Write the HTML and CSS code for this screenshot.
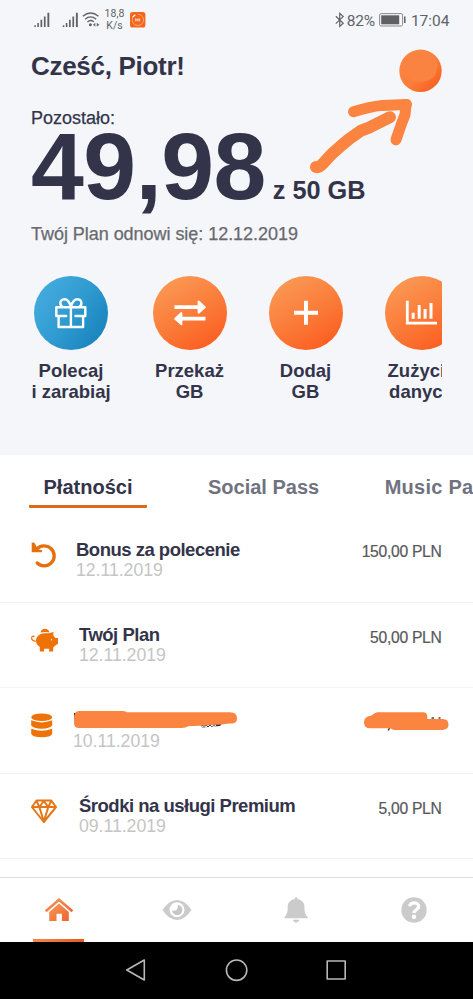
FILE: index.html
```html
<!DOCTYPE html>
<html lang="pl">
<head>
<meta charset="utf-8">
<meta name="viewport" content="width=device-width, initial-scale=1">
<title>Mój plan</title>
<link rel="stylesheet" href="styles.css">
</head>
<body>
<div class="screen">
  <header class="summary">
    <div class="status">
      <svg class="status-left" width="66" height="20" viewBox="34 10 66 20">
        <g fill="#626266">
          <path d="M34.3 25.2h1.5V27h-1.5zM37.3 23h1.6v4h-1.6zM40.5 19.8h1.7V27h-1.7zM43.9 16.6h1.7V27h-1.7zM47.4 12.8h1.9V27h-1.9z"/>
          <path d="M62.8 25.2h1.5V27h-1.5zM65.8 23h1.6v4h-1.6zM69 19.8h1.7V27H69zM72.4 16.6h1.7V27h-1.7zM75.9 12.8h1.9V27h-1.9z"/>
          <circle cx="90.4" cy="24.8" r="1.5"/>
          <path d="M93 24.7l2.3-2v4zM99.3 24.7l-2.5-2v4z"/>
        </g>
        <path d="M82.8 16.2q7.8-6.4 15.6 0M85.1 19.2q5.5-4.6 11 0M87.4 22q3.2-2.8 6.4-.2" fill="none" stroke="#626266" stroke-width="1.4"/>
      </svg>
      <div class="speed"><span>18,8</span><span>K/s</span></div>
      <svg class="status-app" width="16" height="16" viewBox="0 0 16 16">
        <rect width="15.4" height="15.6" rx="2.6" fill="#f4661c"/>
        <path d="M4 3.7a5.7 5.7 0 1 0 3.7-1.5" fill="none" stroke="#ffb58c" stroke-width=".8"/>
        <path d="M2.6 5.1l2.7-2.4" stroke="#fff" stroke-width="1.2"/>
        <path d="M5.8 6.4v3M8 6.4v3M9.6 6.5v2.8M5.8 7.9H8" stroke="#ffe2d2" stroke-width="1"/>
      </svg>
      <svg class="bluetooth" width="10" height="16" viewBox="0 0 10 16"><path d="M.8 4.2l7.4 7L4.7 14.4V1.4l3.5 3.2L.8 11.6" fill="none" stroke="#626266" stroke-width="1.2"/></svg>
      <span class="percent">82%</span>
      <svg class="battery" width="28" height="14" viewBox="0 0 28 14"><rect x=".6" y=".6" width="23" height="12.4" rx="1.5" fill="none" stroke="#8a8a8d"/><rect x="2.2" y="2.3" width="18" height="9" fill="#606064"/><path d="M25.8 3.5v6.5" stroke="#606064" stroke-width="1.5"/></svg>
      <span class="clock">17:04</span>
    </div>

    <h1 class="greeting">Cześć, Piotr!</h1>
    <p class="left-label">Pozostało:</p>
    <div class="usage"><strong class="amount-left">49,98</strong><span class="quota">z 50 GB</span></div>
    <p class="renewal">Twój Plan odnowi się: 12.12.2019</p>

    <nav class="actions">
      <a class="action">
        <span class="disc disc-blue"><svg width="74" height="74" viewBox="0 0 74 74" fill="none" stroke="#fff" stroke-width="2.4" stroke-linejoin="round" stroke-linecap="round"><path d="M24.600 40h-2.300v-8.800h29V40h-2.200M24.600 40v11h24.500V40M36.900 31v20M24.600 40h7.600M41.500 40h7.600"/><path d="M36.900 31C36 26 33 22.700 29.500 23.400c-4 .8-4 5.600-1 7.400M36.900 31c.9-5 3.900-8.300 7.400-7.600 4 .8 4 5.600 1 7.400"/></svg></span>
        <span class="action-label">Polecaj<br>i zarabiaj</span>
      </a>
      <a class="action">
        <span class="disc"><svg width="74" height="74" viewBox="0 0 74 74"><path d="M21.500 31.200H46M28 42.700h24.500" stroke="#fff" stroke-width="3.800"/><path d="M45.600 25.600v11.200l6.200-5.600zM28.400 37.100v11.200l-6.200-5.600z" fill="#fff" stroke="#fff" stroke-width="2" stroke-linejoin="round"/></svg></span>
        <span class="action-label">Przekaż<br>GB</span>
      </a>
      <a class="action">
        <span class="disc"><svg width="74" height="74" viewBox="0 0 74 74"><path d="M25 36.800h24M37 24.800v24" stroke="#fff" stroke-width="4"/></svg></span>
        <span class="action-label">Dodaj<br>GB</span>
      </a>
      <a class="action">
        <span class="disc"><svg width="74" height="74" viewBox="0 0 74 74" fill="none" stroke="#fff"><path d="M22.300 24.800v22.400h29.700" stroke-width="2.800"/><path d="M28.200 36.700v6M34.200 29v13.700M40.100 32.900v9.800M46 27v15.700" stroke-width="3"/></svg></span>
        <span class="action-label">Zużycie<br>danych</span>
      </a>
    </nav>

    <svg class="notice" width="160" height="150" viewBox="300 40 160 150">
      <defs><linearGradient id="knob" x1="0" y1="0" x2="1" y2="1"><stop offset="0" stop-color="#fb8b48"/><stop offset=".55" stop-color="#fb7d38"/><stop offset="1" stop-color="#f85518"/></linearGradient></defs>
      <circle cx="420.500" cy="70.800" r="21.200" fill="url(#knob)"/>
      <path d="M402.500 64c1-7 7-11.500 16-11.500s17 1.500 18.500 8c1 7-.5 13-4 17-4 4-11 4.700-17 4-8-1-14-9-13.500-17.500z" fill="#fb8342"/>
      <g fill="none" stroke="#fa8440" stroke-linecap="round" stroke-linejoin="round">
        <path d="M316 167q3 .8 7-3.500l9-9.800 8-7 9-7.500 12-8.500 8-3 10-5 11-5.500" stroke-width="12"/>
        <path d="M353.500 111.700q16-5 29-6.300l24-1" stroke-width="11"/>
        <path d="M406 104.800l-1 10-3.500 9-5.500 16" stroke-width="11"/>
      </g>
    </svg>
  </header>

  <nav class="tabs">
    <a class="tab tab-on">Płatności</a>
    <a class="tab tab-social">Social Pass</a>
    <a class="tab tab-music">Music Pass</a>
  </nav>

  <main class="payments">
    <article class="row row-near">
      <svg class="row-icon" width="28" height="26" viewBox="0 0 28 26"><path d="M6.200 21a10 10 0 1 0-.5-13.800" fill="none" stroke="#e56f0c" stroke-width="3.300" stroke-linecap="round"/><path d="M.7.6v9.700h10.200V8L7.200 7.500 3.400.8z" fill="#e56f0c"/></svg>
      <div class="what"><h2>Bonus za polecenie</h2><time>12.11.2019</time></div>
      <span class="price">150,00 PLN</span>
    </article>
    <article class="row">
      <svg class="row-icon" width="28" height="26" viewBox="0 0 28 26" fill="#ee7208"><path d="M9.600 4.400C10.300-.5 17.600-.5 18.400 4.400q-4.500-1-8.800 0zM5 12c.8-5 5-6.800 10-6.800h3l4.400-1.300v3.500l1.800 2.700H27v5.600l-3 2-1.800 1.700v4.200h-4.100v-2.900h-5v2.900H8.800v-4.700C6 17.200 4.700 15 5 12z"/><path d="M5.600 13.200C2 13.600.4 11.600.7 9.600c.3-1.500 1.900-2 2.800-.7" fill="none" stroke="#ee7208" stroke-width="1.200"/><circle cx="20.500" cy="11.800" r=".7" fill="#fff"/></svg>
      <div class="what"><h2>Twój Plan</h2><time>12.11.2019</time></div>
      <span class="price">50,00 PLN</span>
    </article>
    <article class="row row-hidden">
      <svg class="row-icon" width="28" height="26" viewBox="0 0 28 26" fill="#ee7208"><ellipse cx="10.700" cy="4.200" rx="10.500" ry="3.800"/><path d="M.2 7.300q10.500 4.300 21 0v5.300q-2 3.100-10.500 3.100T.2 12.600zM.2 15.700q10.500 4.300 21 0V21q-2 3.200-10.500 3.200T.2 21z"/></svg>
      <div class="what"><time>10.11.2019</time></div>
      <svg class="scribble" width="390" height="30" viewBox="70 705 390 30">
        <path d="M74 713h3v4h-3zM201 724.500l21-1-2 2.500-18 1.500z" fill="#34323a"/>
        <path d="M202 727l2-1.500 2 1.500 2-2 2 2 2-2 2 1.500 2-1.500" fill="none" stroke="#fff" stroke-width="1"/>
        <path d="M79 711h43q3 0 5 1.300h103q7 0 7 6t-7 5.200l-9 .9-16 1.200-17 .7q-2 1.700-7 1.700H79q-5 0-5-5v-4q0-8 5-8z" fill="#fa8440"/>
        <path d="M388.200 730.500l1.300-2.500M431.500 718h2.500M438.500 718h2" stroke="#44444a" stroke-width="1.600"/>
        <path d="M377 712.200h46q4 0 4.300 4v2.900H443q5.500.2 5.500 5.500 0 5-5.500 5.300h-49l-4-1.600h-20q-6 0-6-6 0-5.800 7-6.600 3.500-3 6-3.500z" fill="#fa8440"/>
      </svg>
    </article>
    <article class="row">
      <svg class="row-icon" width="28" height="26" viewBox="0 0 28 26" fill="none" stroke="#e67719" stroke-width="2" stroke-linejoin="round"><path d="M5.500 1.500h14.800L25 8 12.800 23 .9 8zM.9 8H25M8.400 8l4.400 14.500L17.300 8M5.500 1.800L8.400 8l4.400-6L17.300 8l3-6.200"/></svg>
      <div class="what"><h2>Środki na usługi Premium</h2><time>09.11.2019</time></div>
      <span class="price">5,00 PLN</span>
    </article>
  </main>

  <nav class="dock">
    <a class="dock-item dock-on"><svg width="30" height="26" viewBox="0 0 30 26"><defs><linearGradient id="home" x1="0" y1="0" x2="1" y2="1"><stop offset="0" stop-color="#f39a5d"/><stop offset="1" stop-color="#f2622b"/></linearGradient></defs><path d="M.9 13.300L15 1l14.200 12.300-1.600 2L15 4.600 2.500 15.300z" fill="url(#home)"/><path d="M15 6.600l9.800 8.300v9.200h-6.900v-7.300h-5.400v7.300H5.200v-9.200z" fill="url(#home)"/></svg></a>
    <a class="dock-item"><svg width="30" height="26" viewBox="0 0 30 26"><path d="M.5 13Q7 2.900 15 2.900T29.500 13Q23 22.900 15 22.900T.5 13z" fill="#cbcbcb"/><circle cx="15" cy="12.800" r="7.500" fill="#fff"/><path d="M15.500 7.700a5.200 5.200 0 1 1-5.500 5.800q4.500 1 5.500-2 .6-2 0-3.800z" fill="#c6c6c6"/></svg></a>
    <a class="dock-item"><svg width="30" height="28" viewBox="0 0 30 28" fill="#cbcbcb"><path d="M13.700 3.100q0-2.200 1.400-2.200t1.400 2.200c4.900 1 7 4 7 8.500 0 5 .8 7 3.100 9.200v1.500H3.600v-1.500c2.300-2.200 3.100-4.200 3.100-9.200 0-4.500 2.100-7.500 7-8.500zM11.800 23.800h6.600q-.7 2.700-3.300 2.700t-3.300-2.700z"/></svg></a>
    <a class="dock-item"><svg width="30" height="26" viewBox="0 0 30 26"><circle cx="15" cy="13" r="12.700" fill="#cbcbcb"/><path d="M10.800 9.300C10.900 4.700 19.700 4.600 19.700 9.500c0 3.200-4.700 3.300-4.700 6.400" fill="none" stroke="#fff" stroke-width="3.300"/><circle cx="15" cy="19.700" r="2.200" fill="#fff"/></svg></a>
  </nav>

  <footer class="system">
    <svg width="220" height="26" viewBox="0 0 220 26" fill="none" stroke="#b8b8b8" stroke-width="1.600" stroke-linejoin="round"><path d="M.8 13L18.300 3v20z"/><circle cx="110.600" cy="13.200" r="10.200"/><rect x="202" y="4" width="18" height="18" transform="translate(-.8)"/></svg>
  </footer>
</div>
</body>
</html>
```
FILE: styles.css
```css
* { box-sizing: border-box; }

body {
  margin: 0;
  background: #fff;
  font-family: "Liberation Sans", Arial, sans-serif;
  color: #33344a;
}

h1, h2, p { margin: 0; }

.screen {
  width: 473px;
  height: 999px;
  overflow: hidden;
  display: flex;
  flex-direction: column;
}

.summary {
  position: relative;
  flex: none;
  height: 454.5px;
  padding: 0 31px;
  background: #f4f6fa;
}

.status {
  display: flex;
  align-items: center;
  height: 40px;
  margin: 0 -7.500px 0 3px;
  font-family: Roboto, sans-serif;
  color: #626266;
}
.speed {
  display: flex;
  flex-direction: column;
  align-items: center;
  width: 20px;
  margin-left: 4.500px;
  font-size: 10.500px;
  line-height: 12.300px;
}
.status-app { margin-left: 5px; }
.bluetooth { margin-left: auto; }
.percent { margin-left: 2px; font-size: 15.500px; letter-spacing: -.2px; line-height: 20px; padding-top: 1px; }
.battery { margin-left: 4px; }
.clock { margin: 0 0 0 4px; font-size: 15.500px; line-height: 20px; padding-top: 1px; }

.greeting {
  margin-top: 11px;
  font-size: 26px;
  line-height: 30px;
  letter-spacing: -.3px;
}
.left-label {
  margin-top: 27px;
  font-size: 18px;
  line-height: 20px;
  -webkit-text-stroke: .25px;
}
.usage {
  display: flex;
  align-items: baseline;
  height: 72px;
  margin-top: 2px;
  font-weight: 700;
}
.amount-left { font-size: 95px; line-height: 72px; letter-spacing: -.6px; }
.quota { margin-left: 7px; font-size: 25.300px; line-height: 26px; }
.renewal {
  margin-top: 21.800px;
  font-size: 18px;
  line-height: 20px;
  letter-spacing: -.04px;
  color: #69696e;
  -webkit-text-stroke: .25px;
}

.actions {
  display: flex;
  gap: 36px;
  width: 410.500px;
  margin-top: 32px;
  overflow: hidden;
}
.action {
  display: flex;
  flex: none;
  flex-direction: column;
  align-items: center;
  width: 80px;
}
.action:first-child { margin-right: 2.500px; }
.disc {
  width: 74px;
  height: 74px;
  border-radius: 50%;
  background: linear-gradient(150deg, #fa9a56 8%, #fb7d3a 50%, #fb5a1e 95%);
}
.disc-blue { background: linear-gradient(125deg, #47acdf 8%, #2f9bd0 50%, #1680ba 95%); }
.disc svg { display: block; }
.action-label {
  margin-top: 10px;
  font-size: 18.500px;
  font-weight: 700;
  line-height: 21px;
  letter-spacing: 0;
  text-align: center;
  white-space: nowrap;
}

.notice { position: absolute; top: 40px; left: 300px; }

.tabs {
  display: flex;
  flex: none;
  height: 62.700px;
  padding: 20.500px 0 0 29px;
  overflow: hidden;
}
.tab {
  flex: none;
  height: 33px;
  font-size: 20px;
  font-weight: 700;
  line-height: 24px;
  color: #71727f;
  white-space: nowrap;
}
.tab-on {
  width: 118px;
  border-bottom: 3px solid #dc6b1a;
  border-radius: 1px;
  color: #33344a;
  text-align: center;
}
.tab-social { margin-left: 61px; }
.tab-music { margin-left: 65.500px; letter-spacing: .25px; }

.row {
  position: relative;
  display: flex;
  height: 85.500px;
  padding: 21.600px 31.500px 0 31px;
  border-bottom: 1.500px solid #f4f4f4;
}
.row-icon { flex: none; margin-top: 3.500px; }
.what { margin-left: 20px; }
.row-near .what { margin-left: 17px; }
.row-hidden .what { margin: 21px 0 0 14px; }
.what h2 { font-size: 18.500px; line-height: 21px; letter-spacing: -.5px; }
.what time {
  display: block;
  font-size: 17.700px;
  line-height: 21px;
  letter-spacing: -.04px;
  color: #c5c5c5;
}
.price {
  margin: 3.600px 0 0 auto;
  font-size: 15.700px;
  line-height: 20px;
  letter-spacing: -.3px;
  color: #58585b;
  -webkit-text-stroke: .2px;
}
.scribble { position: absolute; top: 17px; left: 70px; }

.dock {
  display: flex;
  flex: none;
  height: 65px;
  margin-top: 17.800px;
  border-top: 1.500px solid #dedede;
}
.dock-item {
  display: flex;
  flex: 1;
  align-items: center;
  justify-content: center;
}
.dock-on { position: relative; }
.dock-on::after {
  content: "";
  position: absolute;
  bottom: 0;
  left: 33px;
  width: 51px;
  height: 3px;
  background: linear-gradient(90deg, #f08a50, #e65a20);
}

.system {
  display: flex;
  flex: 1;
  align-items: center;
  padding-left: 126px;
  background: #000;
}
```
